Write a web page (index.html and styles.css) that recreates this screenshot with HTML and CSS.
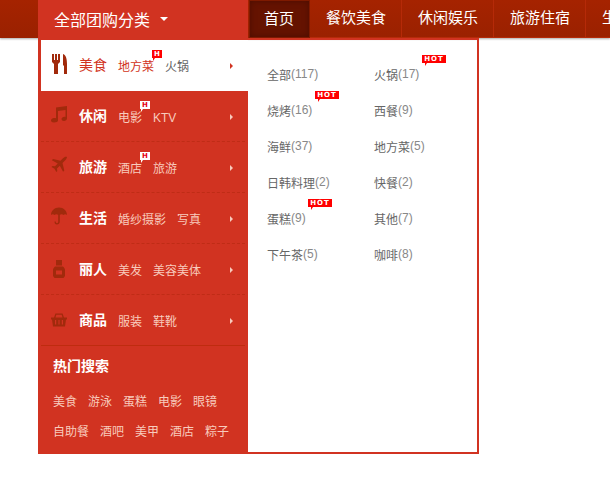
FILE: index.html
```html
<!DOCTYPE html>
<html lang="zh">
<head>
<meta charset="utf-8">
<title>全部团购分类</title>
<link rel="stylesheet" href="styles.css">
</head>
<body>
<header class="topbar">
  <div class="cat-btn"><span>全部团购分类</span><i class="caret"></i></div>
  <nav class="nav">
    <a class="nav-item current">首页</a>
    <a class="nav-item">餐饮美食</a>
    <a class="nav-item">休闲娱乐</a>
    <a class="nav-item">旅游住宿</a>
    <a class="nav-item">生活服务</a>
  </nav>
</header>
<main class="panel">
  <aside class="side">
    <div class="row active"><div class="row-body">
      <svg class="ico" viewBox="0 0 16 20"><path d="M1 0h2v6h1V0h2v6h1V0h2v8l-2 2v10H3V10L1 8zM12 0c3 1 4 5 4 10v10h-3v-8l-1-1z"/></svg>
      <b class="label">美食</b>
      <a class="sub">地方菜<i class="h">H</i></a><a class="sub">火锅</a>
      <i class="arrow"></i>
    </div></div>
    <div class="row"><div class="row-body">
      <svg class="ico" viewBox="0 0 16 16"><path d="M5 1.500 16 0v12.500c0 1.500-1.500 2.500-3 2.500s-2.500-.8-2.500-2 1.500-2.300 3-2.300c.4 0 .8 0 1 .2V4L7 5v9.500C7 15.500 5.500 16.500 3 16.500S0 15.500 0 14.300s1.500-2.300 3-2.300c.8 0 1.500.1 2 .3z"/></svg>
      <b class="label">休闲</b>
      <a class="sub">电影<i class="h">H</i></a><a class="sub">KTV</a>
      <i class="arrow"></i>
    </div></div>
    <div class="row"><div class="row-body">
      <svg class="ico" viewBox="0 0 16 16"><path d="M16 0c-1.500-.5-3 .3-4 1.300L9.500 3.800 2 2 .8 3.200l6 3.300L4 9.300 1.500 9 .5 10l3 1.800L5.300 15l1-1-.3-2.500 2.800-2.800 3.300 6 1.200-1.200-1.800-7.500 2.500-2.500c1-1 2-2.500 2-3.500z"/></svg>
      <b class="label">旅游</b>
      <a class="sub">酒店<i class="h">H</i></a><a class="sub">旅游</a>
      <i class="arrow"></i>
    </div></div>
    <div class="row"><div class="row-body">
      <svg class="ico" viewBox="0 0 16 17"><path d="M8 0c4.500 0 8 3.200 8 7.500-1-1-2.500-1-3.500 0-.9-1-2.500-1-3.700-.2V14c0 1.700-1.100 3-2.800 3S3.500 15.700 3.500 14h1.300c0 1 .5 1.700 1.200 1.700S7.200 15 7.200 14V7.300C6 6.500 4.400 6.500 3.500 7.500c-1-1-2.500-1-3.500 0C0 3.200 3.500 0 8 0z"/></svg>
      <b class="label">生活</b>
      <a class="sub">婚纱摄影</a><a class="sub">写真</a>
      <i class="arrow"></i>
    </div></div>
    <div class="row"><div class="row-body">
      <svg class="ico bottle" viewBox="0 0 12 18"><path fill-rule="evenodd" d="M3 0h6v5.500H3zM2 6.500h8C11.500 8 12 9 12 10v6l-1.500 2h-9L0 16v-6c0-1 .5-2 2-3.500zM3 10.500v4h6v-4z"/></svg>
      <b class="label">丽人</b>
      <a class="sub">美发</a><a class="sub">美容美体</a>
      <i class="arrow"></i>
    </div></div>
    <div class="row"><div class="row-body">
      <svg class="ico basket" viewBox="0 0 16 13"><path fill-rule="evenodd" d="M4.500 0h7L13 4h3v2h-1l-1 7H2L1 6H0V4h3zM5.300 1.300 4.500 4h7l-.8-2.700zM4 6.500V11h1.200V6.500zM7.400 6.500V11h1.200V6.500zM10.800 6.500V11H12V6.500z"/></svg>
      <b class="label">商品</b>
      <a class="sub">服装</a><a class="sub">鞋靴</a>
      <i class="arrow"></i>
    </div></div>
    <section class="hot-search">
      <h3>热门搜索</h3>
      <div class="hot-line"><a>美食</a><a>游泳</a><a>蛋糕</a><a>电影</a><a>眼镜</a></div>
      <div class="hot-line"><a>自助餐</a><a>酒吧</a><a>美甲</a><a>酒店</a><a>粽子</a></div>
    </section>
  </aside>
  <section class="list">
    <a class="cell">全部<em>(117)</em></a>
    <a class="cell">火锅<em>(17)</em><i class="hot far">HOT</i></a>
    <a class="cell">烧烤<em>(16)</em><i class="hot far">HOT</i></a>
    <a class="cell">西餐<em>(9)</em></a>
    <a class="cell">海鲜<em>(37)</em></a>
    <a class="cell">地方菜<em>(5)</em></a>
    <a class="cell">日韩料理<em>(2)</em></a>
    <a class="cell">快餐<em>(2)</em></a>
    <a class="cell">蛋糕<em>(9)</em><i class="hot near">HOT</i></a>
    <a class="cell">其他<em>(7)</em></a>
    <a class="cell">下午茶<em>(5)</em></a>
    <a class="cell">咖啡<em>(8)</em></a>
  </section>
</main>
</body>
</html>
```
FILE: styles.css
```css
* { box-sizing: border-box; }
html, body { margin: 0; padding: 0; }
body {
  width: 610px;
  height: 488px;
  overflow: hidden;
  background: #fff;
  font-family: "Liberation Sans", "Noto Sans CJK SC", sans-serif;
  color: #666;
}
a { text-decoration: none; color: inherit; }
i, em { font-style: normal; }

.topbar {
  position: relative;
  display: flex;
  height: 38px;
  background: linear-gradient(#a52300, #9a2100);
  box-shadow: 0 1px 2px #aaa;
  overflow: hidden;
}
.cat-btn {
  flex: none;
  display: flex;
  align-items: center;
  width: 210px;
  margin-left: 38px;
  padding-left: 16px;
  background: #d13321;
  color: #fff;
  font-size: 16px;
}
.caret {
  width: 0;
  height: 0;
  margin-left: 10px;
  border: 4px solid transparent;
  border-top-color: #fff;
  border-bottom-width: 0;
}
.nav { display: flex; flex: none; margin-left: 1px; }
.nav-item {
  flex: none;
  width: 92px;
  padding-left: 16px;
  line-height: 36px;
  border: solid #b52a08;
  border-width: 0 1px 1px 0;
  color: #fff;
  font-size: 15px;
}
.nav-item.current {
  width: 61px;
  border: 1px solid #7e1a00;
  padding-left: 14px;
  background: #651300;
  box-shadow: inset 0 0 6px #4c0e00;
  line-height: 35px;
}

.panel {
  position: relative;
  display: flex;
  width: 441px;
  height: 416px;
  margin-left: 38px;
  border: solid #d13321;
  border-width: 2px 2px 2px 0;
}
.side {
  flex: none;
  width: 210px;
  padding-left: 3px;
  background: #d13321;
  color: #fff;
}
.row { height: 51px; }
.row-body {
  display: flex;
  align-items: center;
  height: 51px;
  margin-right: 3px;
  padding: 2px 0 0 10px;
  border-bottom: 1px dashed #bf2c16;
}
.row:nth-child(6) .row-body { border-bottom: 1px solid #bf2c0f; }
.ico {
  flex: none;
  width: 16px;
  height: 20px;
  margin-right: 12px;
  margin-top: -6px;
  fill: #a12a0c;
}
.ico.bottle { width: 12px; height: 18px; margin: -2px 14px 0 2px; }
.ico.basket { height: 14px; margin-top: -2px; }
.label {
  width: 28px;
  margin-right: 11px;
  margin-top: -3px;
  font-size: 14px;
  line-height: 18px;
  font-weight: 700;
}
.sub {
  position: relative;
  margin-right: 11px;
  margin-top: 2px;
  font-size: 12px;
  line-height: 18px;
  color: #f8cbbd;
}
.arrow {
  width: 0;
  height: 0;
  margin-left: auto;
  margin-right: 12px;
  border: 3px solid transparent;
  border-left-color: #f8cbbd;
  border-right-width: 0;
}
.active .row-body { margin-right: 0; background: #fff; border-bottom: 0; padding: 1px 3px 0 10px; }
.active .ico { margin-top: -5px; }
.active .label { color: #d13321; font-weight: 400; }
.active .sub { color: #666; }
.active .sub:first-of-type { color: #d13321; }
.active .arrow { border-left-color: #d13321; }

.h {
  position: absolute;
  left: 22px;
  top: -8px;
  width: 10px;
  height: 8px;
  background: #fff;
  color: #e60012;
  font: 700 7px/9px "DejaVu Sans", sans-serif;
  text-align: center;
}
.h::after {
  content: "";
  position: absolute;
  left: 1px;
  top: 8px;
  border: solid transparent;
  border-width: 3px 2px 0 0;
  border-top-color: #fff;
}
.active .sub:first-of-type .h { left: 34px; background: #f00; color: #fff; }
.active .h::after { border-top-color: #f00; }

.hot-search { padding: 10px 0 0 12px; }
.hot-search h3 {
  margin: 0;
  font-size: 14px;
  line-height: 20px;
  font-weight: 700;
}
.hot-line {
  display: flex;
  gap: 11px;
  height: 30px;
  align-items: center;
  font-size: 12px;
  color: #f8cbbd;
}
.hot-search h3 + .hot-line { margin-top: 9px; }

.list {
  flex: 1;
  display: grid;
  grid-template-columns: 107px 1fr;
  grid-auto-rows: 36px;
  align-content: start;
  padding: 16px 0 0 19px;
}
.cell {
  position: relative;
  display: flex;
  align-items: center;
  font-size: 12px;
  color: #666;
}
.cell em { color: #888; }
.hot {
  position: absolute;
  top: -1px;
  width: 24px;
  height: 8px;
  background: #f00;
  color: #fff;
  font: 700 7px/9px "DejaVu Sans", sans-serif;
  letter-spacing: 1px;
  text-align: center;
}
.hot::after {
  content: "";
  position: absolute;
  left: 3px;
  top: 8px;
  border: solid transparent;
  border-width: 3px 2px 0 0;
  border-top-color: #f00;
}
.hot.far { left: 48px; }
.hot.near { left: 41px; }
```
